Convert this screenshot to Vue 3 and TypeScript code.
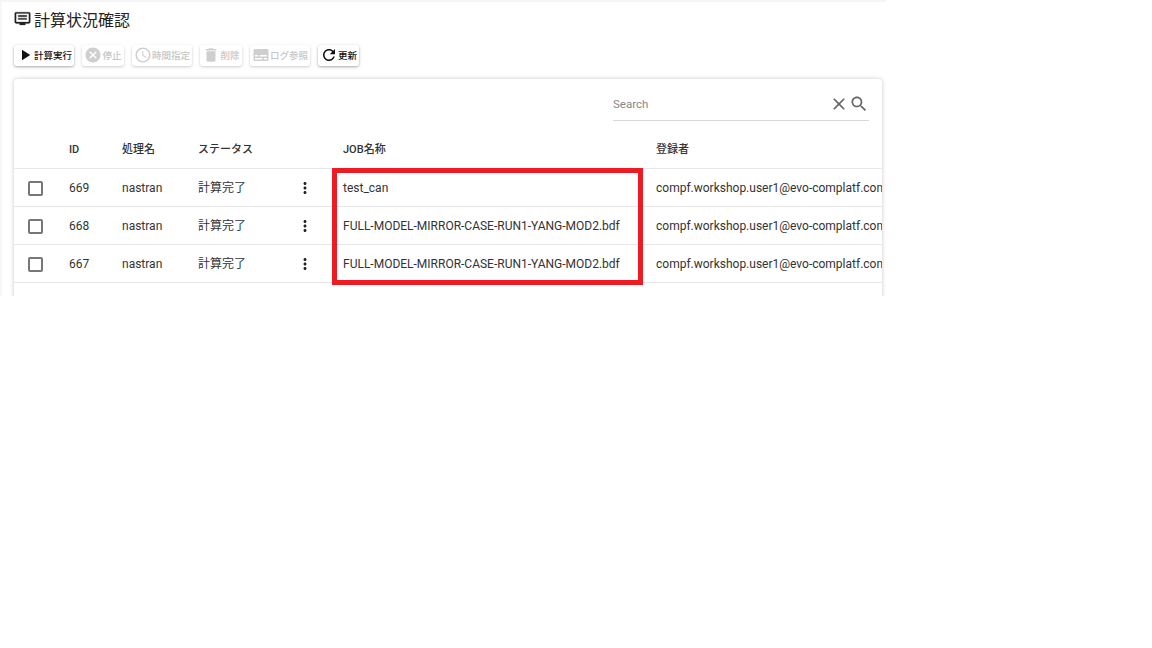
<template>
  <div class="page">
    <div class="content">
      <h1 class="title">
        <svg class="title-icon" viewBox="0 0 24 24" width="17" height="17">
          <path d="M21 3H3c-1.100 0-2 .9-2 2v12c0 1.100.9 2 2 2h5v2h8v-2h5c1.100 0 2-.9 2-2V5c0-1.100-.9-2-2-2zm0 14H3V5h18v12zM6 7.500h12v2H6zm0 4h12v2H6z" fill="#222" stroke="#222" stroke-width="0.4" />
        </svg>
        計算状況確認
      </h1>

      <div class="toolbar">
        <button v-for="b in buttons" :key="b.label" class="btn" :class="{ off: b.off }" :style="{ width: b.width + 'px' }">
          <svg viewBox="0 0 24 24" width="18" height="18"><path :d="b.icon" /></svg>
          <span>{{ b.label }}</span>
        </button>
      </div>

      <div class="card">
        <div class="search-row">
          <div class="search">
            <span class="placeholder">Search</span>
            <svg viewBox="0 0 24 24" width="20" height="20"><path d="M19 6.410 17.590 5 12 10.590 6.410 5 5 6.410 10.590 12 5 17.590 6.410 19 12 13.410 17.590 19 19 17.590 13.410 12z" /></svg>
            <svg viewBox="0 0 24 24" width="20" height="20"><path d="M15.500 14h-.79l-.28-.27C15.410 12.590 16 11.110 16 9.500 16 5.910 13.090 3 9.500 3S3 5.910 3 9.500 5.910 16 9.500 16c1.610 0 3.090-.59 4.230-1.570l.27.28v.79l5 4.990L20.490 19l-4.990-5zm-6 0C7.010 14 5 11.990 5 9.500S7.010 5 9.500 5 14 7.010 14 9.500 11.990 14 9.500 14z" /></svg>
          </div>
        </div>

        <div class="row head">
          <div class="c-check"></div>
          <div class="c-id">ID</div>
          <div class="c-proc">処理名</div>
          <div class="c-status">ステータス</div>
          <div class="c-menu"></div>
          <div class="c-job">JOB名称</div>
          <div class="c-user">登録者</div>
        </div>
        <div v-for="r in rows" :key="r.id" class="row">
          <div class="c-check"><span class="box"></span></div>
          <div class="c-id">{{ r.id }}</div>
          <div class="c-proc">nastran</div>
          <div class="c-status">計算完了</div>
          <div class="c-menu">
            <svg viewBox="0 0 24 24" width="18" height="18"><path d="M12 8c1.100 0 2-.9 2-2s-.9-2-2-2-2 .9-2 2 .9 2 2 2zm0 2c-1.100 0-2 .9-2 2s.9 2 2 2 2-.9 2-2-.9-2-2-2zm0 6c-1.100 0-2 .9-2 2s.9 2 2 2 2-.9 2-2-.9-2-2-2z" /></svg>
          </div>
          <div class="c-job">{{ r.job }}</div>
          <div class="c-user">compf.workshop.user1@evo-complatf.com</div>
        </div>

        <div class="highlight"></div>
      </div>
    </div>
  </div>
</template>

<script setup lang="ts">
interface ToolButton {
  label: string
  icon: string
  width: number
  off: boolean
}

const buttons: ToolButton[] = [
  { label: '計算実行', icon: 'M8 5v14l11-7z', width: 60, off: false },
  { label: '停止', icon: 'M12 2C6.470 2 2 6.470 2 12s4.470 10 10 10 10-4.470 10-10S17.530 2 12 2zm5 13.590L15.590 17 12 13.410 8.410 17 7 15.590 10.590 12 7 8.410 8.410 7 12 10.590 15.590 7 17 8.410 13.410 12 17 15.590z', width: 42, off: true },
  { label: '時間指定', icon: 'M11.990 2C6.470 2 2 6.480 2 12s4.470 10 9.990 10C17.520 22 22 17.520 22 12S17.520 2 11.990 2zM12 20c-4.420 0-8-3.580-8-8s3.580-8 8-8 8 3.580 8 8-3.580 8-8 8zm.5-13H11v6l5.250 3.150.75-1.230-4.500-2.670z', width: 60, off: true },
  { label: '削除', icon: 'M6 19c0 1.100.9 2 2 2h8c1.100 0 2-.9 2-2V7H6v12zM19 4h-3.500l-1-1h-5l-1 1H5v2h14V4z', width: 42, off: true },
  { label: 'ログ参照', icon: 'M20 4H4c-1.100 0-2 .9-2 2v12c0 1.100.9 2 2 2h16c1.100 0 2-.9 2-2V6c0-1.100-.9-2-2-2zM4 12h4v2H4v-2zm10 6H4v-2h10v2zm6 0h-4v-2h4v2zm0-4H10v-2h10v2z', width: 60, off: true },
  { label: '更新', icon: 'M17.650 6.350C16.200 4.900 14.210 4 12 4c-4.420 0-7.990 3.580-7.990 8s3.570 8 7.990 8c3.730 0 6.840-2.550 7.730-6h-2.080c-.82 2.330-3.040 4-5.650 4-3.310 0-6-2.690-6-6s2.690-6 6-6c1.660 0 3.140.69 4.220 1.780L13 11h7V4l-2.350 2.350z', width: 41, off: false },
]

const job = 'FULL-MODEL-MIRROR-CASE-RUN1-YANG-MOD2.bdf'
const rows = [
  { id: 669, job: 'test_can' },
  { id: 668, job },
  { id: 667, job },
]
</script>

<style scoped>
.page {
  width: 886px;
  height: 296px;
  overflow: hidden;
  border-top: 2px solid #f5f5f5;
  border-left: 2px solid #f7f7f7;
  box-sizing: border-box;
  font-family: Roboto, "Noto Sans CJK JP", sans-serif;
  color: #333;
}

.content {
  padding: 0 4px 0 12px;
}

.title {
  display: flex;
  align-items: center;
  gap: 3px;
  height: 33px;
  margin: 0;
  font-size: 16px;
  font-weight: 400;
  color: #222;
}

.title-icon {
  flex: none;
}

.toolbar {
  display: flex;
  gap: 8px;
  margin-top: 10px;
  height: 21px;
}

.btn {
  display: flex;
  align-items: center;
  justify-content: center;
  height: 21px;
  padding: 0 0 2px;
  border: none;
  border-radius: 3px;
  background: #fff;
  box-shadow: 0 1px 3px rgba(0, 0, 0, 0.35);
  font-family: inherit;
  font-size: 9.500px;
  font-weight: 500;
  color: #111;
}

.btn svg {
  fill: #111;
  flex: none;
}

.btn.off {
  color: #c6c6c6;
  box-shadow: 0 1px 3px rgba(0, 0, 0, 0.2);
}

.btn.off svg {
  fill: #cfcfcf;
}

.card {
  position: relative;
  margin-top: 13px;
  height: 240px;
  background: #fff;
  border-radius: 4px 4px 0 0;
  box-shadow: 0 0 4px rgba(0, 0, 0, 0.22);
  overflow: hidden;
}

.search-row {
  display: flex;
  justify-content: flex-end;
  padding: 8px 13px 0 0;
  height: 42px;
  box-sizing: border-box;
}

.search {
  display: flex;
  align-items: center;
  width: 256px;
  height: 34px;
  border-bottom: 1px solid #d8d8d8;
  box-sizing: border-box;
}

.placeholder {
  flex: 1;
  font-size: 11.500px;
  color: #888;
}

.search svg {
  fill: #666;
  flex: none;
}

.row {
  display: flex;
  align-items: center;
  height: 38px;
  border-bottom: 1px solid #e6e6e6;
  box-sizing: border-box;
  font-size: 12px;
  line-height: 16px;
  white-space: nowrap;
}

.row.head {
  height: 48px;
  padding-top: 10px;
  font-size: 11px;
  font-weight: 500;
}

.c-check {
  display: flex;
  justify-content: center;
  width: 55px;
  padding-right: 12px;
  box-sizing: border-box;
  flex: none;
}

.box {
  width: 15px;
  height: 15px;
  margin-top: 2px;
  border: 2px solid #777;
  border-radius: 2px;
  box-sizing: border-box;
}

.c-id {
  width: 53px;
  flex: none;
}

.c-proc {
  width: 76px;
  flex: none;
}

.c-status {
  width: 96px;
  flex: none;
}

.c-menu {
  display: flex;
  width: 49px;
  padding-left: 1.500px;
  box-sizing: border-box;
  flex: none;
}

.c-menu svg {
  fill: #222;
}

.c-job {
  width: 313px;
  flex: none;
}

.c-user {
  flex: none;
}

.highlight {
  position: absolute;
  left: 318px;
  top: 89px;
  width: 311px;
  height: 117px;
  border: 5px solid #ed1c24;
  box-sizing: border-box;
  pointer-events: none;
}
</style>

<style>
body {
  background: #fff;
}
</style>
